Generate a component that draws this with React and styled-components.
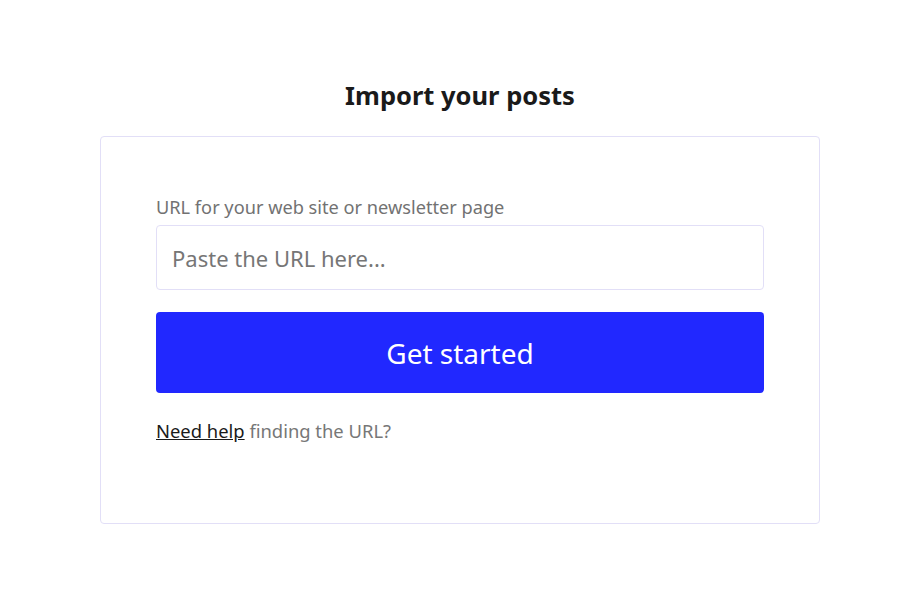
import React, { useState } from "react";
import styled, { createGlobalStyle } from "styled-components";

const GlobalStyle = createGlobalStyle`
  html, body {
    margin: 0;
    padding: 0;
    background: #ffffff;
  }
  body {
    font-family: "Noto Sans", "Open Sans", sans-serif;
  }
`;

const App = () => {
  const [url, setUrl] = useState("");

  return (
    <>
      <GlobalStyle />
      <Page>
        <Title>Import your posts</Title>
        <Card>
          <Label htmlFor="site-url">URL for your web site or newsletter page</Label>
          <UrlInput
            id="site-url"
            placeholder="Paste the URL here..."
            value={url}
            onChange={(e) => setUrl(e.target.value)}
          />
          <StartButton type="button">Get started</StartButton>
          <HelpText>
            <HelpLink href="#">Need help</HelpLink> finding the URL?
          </HelpText>
        </Card>
      </Page>
    </>
  );
};

// Styled components
const Page = styled.main`
  display: flex;
  flex-direction: column;
  align-items: center;
  padding: 79px 2px 0 0;
`;

const Title = styled.h1`
  margin: 0 0 25px;
  font-size: 25.5px;
  line-height: 32px;
  font-weight: 700;
  color: #1a1a1a;
`;

const Card = styled.section`
  box-sizing: border-box;
  width: 720px;
  padding: 58px 55px 80px;
  border: 1px solid #e2dff7;
  border-radius: 4px;
  display: flex;
  flex-direction: column;
`;

const Label = styled.label`
  font-size: 18.2px;
  line-height: 24px;
  color: #727272;
  margin-bottom: 6px;
`;

const UrlInput = styled.input`
  box-sizing: border-box;
  height: 65px;
  width: 100%;
  padding: 0 15px;
  border: 1px solid #e2dff7;
  border-radius: 4px;
  font-family: inherit;
  font-size: 22px;
  color: #222;
  outline: none;

  &::placeholder {
    color: #767676;
  }
`;

const StartButton = styled.button`
  margin-top: 22px;
  height: 81px;
  width: 100%;
  border: none;
  border-radius: 4px;
  background: #2128ff;
  color: #ffffff;
  font-family: inherit;
  font-size: 28px;
  cursor: pointer;
`;

const HelpText = styled.p`
  margin: 26px 0 0;
  font-size: 18.4px;
  line-height: 24px;
  color: #777777;
`;

const HelpLink = styled.a`
  color: #1a1a1a;
  text-decoration: underline;
`;

export default App;
